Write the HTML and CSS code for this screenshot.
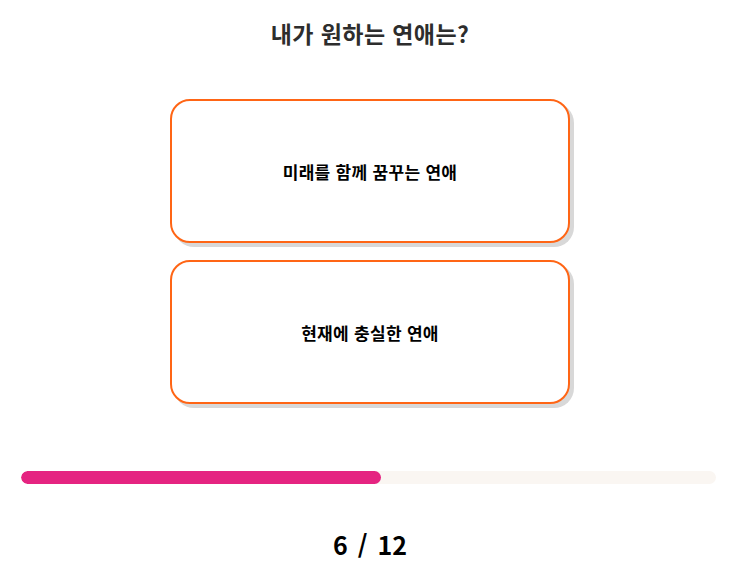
FILE: index.html
```html
<!DOCTYPE html>
<html lang="ko">
<head>
<meta charset="utf-8">
<link rel="stylesheet" href="styles.css">
</head>
<body>
<div class="page">
  <h1 class="title">내가 원하는 연애는?</h1>
  <div class="choices">
    <button class="choice">미래를 함께 꿈꾸는 연애</button>
    <button class="choice">현재에 충실한 연애</button>
  </div>
  <div class="progress"><div class="progress-fill" style="width:360px"></div></div>
  <div class="counter">6 / 12</div>
</div>
</body>
</html>
```
FILE: styles.css
```css
html, body { margin: 0; padding: 0; background: #fff; }
body { font-family: "Noto Sans CJK KR", "Noto Sans", sans-serif; }
.page { display: flex; flex-direction: column; align-items: center; padding: 16px 0 0 8px; }
.title { margin: 0; font-size: 23px; letter-spacing: 0.4px; line-height: 34px; font-weight: 700; color: #2d2d2d; }
.choices { display: flex; flex-direction: column; gap: 17px; margin-top: 49px; }
.choice {
  width: 400px; height: 144px; box-sizing: border-box;
  background: #fff; border: 2px solid #ff6515; border-radius: 20px;
  box-shadow: 4px 4px 0 #d8d8d8;
  font-family: inherit; font-size: 17px; letter-spacing: 0.3px; font-weight: 700; color: #000;
  cursor: pointer;
}
.progress {
  align-self: stretch; margin: 67px 16px 0 13px; height: 13px;
  background: #faf6f2; border-radius: 7px; overflow: hidden;
}
.progress-fill { height: 100%; background: #e52481; border-radius: 7px; }
.counter { margin-top: 44px; font-size: 25px; word-spacing: 3px; font-weight: 700; color: #000; line-height: 32px; }
```
